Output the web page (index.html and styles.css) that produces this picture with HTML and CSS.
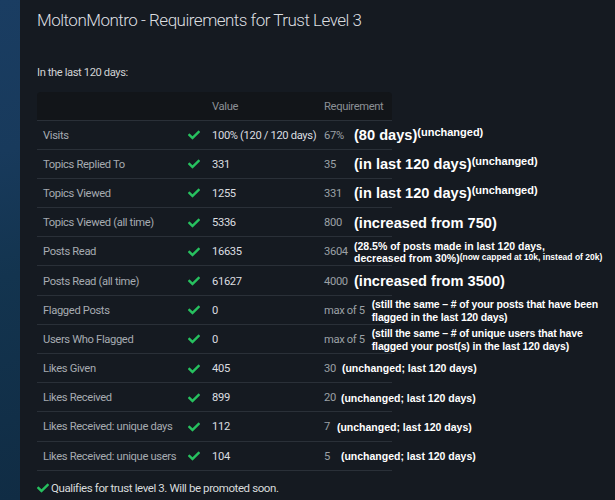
FILE: index.html
```html
<!DOCTYPE html>
<html>
<head>
<meta charset="utf-8">
<link rel="stylesheet" href="styles.css">
</head>
<body>
<div class="page">
  <div class="side"></div>
  <main class="main">
    <h1 class="title">MoltonMontro - Requirements for Trust Level 3</h1>
    <p class="intro">In the last 120 days:</p>
    <div class="table">
      <div class="row head"><span></span><span></span><span class="cell">Value</span><span class="cell">Requirement</span></div>
      <div class="row">
        <span class="cell lbl">Visits</span>
        <span class="ok"><svg viewBox="0 0 512 512"><path d="M173.9 439.4l-166.4-166.4c-10-10-10-26.2 0-36.2l36.2-36.2c10-10 26.2-10 36.2 0L192 312.7 432.1 72.6c10-10 26.2-10 36.2 0l36.2 36.2c10 10 10 26.2 0 36.2l-294.4 294.4c-10 10-26.2 10-36.2 0z"/></svg></span>
        <span class="cell val">100% (120 / 120 days)</span>
        <span class="cell req"><span class="num wide">67%</span><span class="note big">(80 days)<sup class="sup">(unchanged)</sup></span></span>
      </div>
      <div class="row">
        <span class="cell lbl">Topics Replied To</span>
        <span class="ok"><svg viewBox="0 0 512 512"><path d="M173.9 439.4l-166.4-166.4c-10-10-10-26.2 0-36.2l36.2-36.2c10-10 26.2-10 36.2 0L192 312.7 432.1 72.6c10-10 26.2-10 36.2 0l36.2 36.2c10 10 10 26.2 0 36.2l-294.4 294.4c-10 10-26.2 10-36.2 0z"/></svg></span>
        <span class="cell val">331</span>
        <span class="cell req"><span class="num wide">35</span><span class="note big">(in last 120 days)<sup class="sup">(unchanged)</sup></span></span>
      </div>
      <div class="row">
        <span class="cell lbl">Topics Viewed</span>
        <span class="ok"><svg viewBox="0 0 512 512"><path d="M173.9 439.4l-166.4-166.4c-10-10-10-26.2 0-36.2l36.2-36.2c10-10 26.2-10 36.2 0L192 312.7 432.1 72.6c10-10 26.2-10 36.2 0l36.2 36.2c10 10 10 26.2 0 36.2l-294.4 294.4c-10 10-26.2 10-36.2 0z"/></svg></span>
        <span class="cell val">1255</span>
        <span class="cell req"><span class="num wide">331</span><span class="note big">(in last 120 days)<sup class="sup">(unchanged)</sup></span></span>
      </div>
      <div class="row">
        <span class="cell lbl">Topics Viewed (all time)</span>
        <span class="ok"><svg viewBox="0 0 512 512"><path d="M173.9 439.4l-166.4-166.4c-10-10-10-26.2 0-36.2l36.2-36.2c10-10 26.2-10 36.2 0L192 312.7 432.1 72.6c10-10 26.2-10 36.2 0l36.2 36.2c10 10 10 26.2 0 36.2l-294.4 294.4c-10 10-26.2 10-36.2 0z"/></svg></span>
        <span class="cell val">5336</span>
        <span class="cell req"><span class="num wide">800</span><span class="note big">(increased from 750)</span></span>
      </div>
      <div class="row">
        <span class="cell lbl">Posts Read</span>
        <span class="ok"><svg viewBox="0 0 512 512"><path d="M173.9 439.4l-166.4-166.4c-10-10-10-26.2 0-36.2l36.2-36.2c10-10 26.2-10 36.2 0L192 312.7 432.1 72.6c10-10 26.2-10 36.2 0l36.2 36.2c10 10 10 26.2 0 36.2l-294.4 294.4c-10 10-26.2 10-36.2 0z"/></svg></span>
        <span class="cell val">16635</span>
        <span class="cell req"><span class="num wide">3604</span><span class="note small two">(28.5% of posts made in last 120 days,<br>decreased from 30%)<sup class="tiny">(now capped at 10k, instead of 20k)</sup></span></span>
      </div>
      <div class="row">
        <span class="cell lbl">Posts Read (all time)</span>
        <span class="ok"><svg viewBox="0 0 512 512"><path d="M173.9 439.4l-166.4-166.4c-10-10-10-26.2 0-36.2l36.2-36.2c10-10 26.2-10 36.2 0L192 312.7 432.1 72.6c10-10 26.2-10 36.2 0l36.2 36.2c10 10 10 26.2 0 36.2l-294.4 294.4c-10 10-26.2 10-36.2 0z"/></svg></span>
        <span class="cell val">61627</span>
        <span class="cell req"><span class="num wide">4000</span><span class="note big">(increased from 3500)</span></span>
      </div>
      <div class="row">
        <span class="cell lbl">Flagged Posts</span>
        <span class="ok"><svg viewBox="0 0 512 512"><path d="M173.9 439.4l-166.4-166.4c-10-10-10-26.2 0-36.2l36.2-36.2c10-10 26.2-10 36.2 0L192 312.7 432.1 72.6c10-10 26.2-10 36.2 0l36.2 36.2c10 10 10 26.2 0 36.2l-294.4 294.4c-10 10-26.2 10-36.2 0z"/></svg></span>
        <span class="cell val">0</span>
        <span class="cell req"><span class="num">max of 5</span><span class="note small two flag">(still the same – # of your posts that have been<br>flagged in the last 120 days)</span></span>
      </div>
      <div class="row">
        <span class="cell lbl">Users Who Flagged</span>
        <span class="ok"><svg viewBox="0 0 512 512"><path d="M173.9 439.4l-166.4-166.4c-10-10-10-26.2 0-36.2l36.2-36.2c10-10 26.2-10 36.2 0L192 312.7 432.1 72.6c10-10 26.2-10 36.2 0l36.2 36.2c10 10 10 26.2 0 36.2l-294.4 294.4c-10 10-26.2 10-36.2 0z"/></svg></span>
        <span class="cell val">0</span>
        <span class="cell req"><span class="num">max of 5</span><span class="note small two flag">(still the same – # of unique users that have<br>flagged your post(s) in the last 120 days)</span></span>
      </div>
      <div class="row">
        <span class="cell lbl">Likes Given</span>
        <span class="ok"><svg viewBox="0 0 512 512"><path d="M173.9 439.4l-166.4-166.4c-10-10-10-26.2 0-36.2l36.2-36.2c10-10 26.2-10 36.2 0L192 312.7 432.1 72.6c10-10 26.2-10 36.2 0l36.2 36.2c10 10 10 26.2 0 36.2l-294.4 294.4c-10 10-26.2 10-36.2 0z"/></svg></span>
        <span class="cell val">405</span>
        <span class="cell req"><span class="num">30</span><span class="note small gap6">(unchanged; last 120 days)</span></span>
      </div>
      <div class="row">
        <span class="cell lbl">Likes Received</span>
        <span class="ok"><svg viewBox="0 0 512 512"><path d="M173.9 439.4l-166.4-166.4c-10-10-10-26.2 0-36.2l36.2-36.2c10-10 26.2-10 36.2 0L192 312.7 432.1 72.6c10-10 26.2-10 36.2 0l36.2 36.2c10 10 10 26.2 0 36.2l-294.4 294.4c-10 10-26.2 10-36.2 0z"/></svg></span>
        <span class="cell val">899</span>
        <span class="cell req"><span class="num">20</span><span class="note small gap5">(unchanged; last 120 days)</span></span>
      </div>
      <div class="row">
        <span class="cell lbl">Likes Received: unique days</span>
        <span class="ok"><svg viewBox="0 0 512 512"><path d="M173.9 439.4l-166.4-166.4c-10-10-10-26.2 0-36.2l36.2-36.2c10-10 26.2-10 36.2 0L192 312.7 432.1 72.6c10-10 26.2-10 36.2 0l36.2 36.2c10 10 10 26.2 0 36.2l-294.4 294.4c-10 10-26.2 10-36.2 0z"/></svg></span>
        <span class="cell val">112</span>
        <span class="cell req"><span class="num">7</span><span class="note small gap7">(unchanged; last 120 days)</span></span>
      </div>
      <div class="row">
        <span class="cell lbl">Likes Received: unique users</span>
        <span class="ok"><svg viewBox="0 0 512 512"><path d="M173.9 439.4l-166.4-166.4c-10-10-10-26.2 0-36.2l36.2-36.2c10-10 26.2-10 36.2 0L192 312.7 432.1 72.6c10-10 26.2-10 36.2 0l36.2 36.2c10 10 10 26.2 0 36.2l-294.4 294.4c-10 10-26.2 10-36.2 0z"/></svg></span>
        <span class="cell val">104</span>
        <span class="cell req"><span class="num">5</span><span class="note small gap11">(unchanged; last 120 days)</span></span>
      </div>
    </div>
    <p class="foot"><svg class="foot-ok" viewBox="0 0 512 512"><path d="M173.9 439.4l-166.4-166.4c-10-10-10-26.2 0-36.2l36.2-36.2c10-10 26.2-10 36.2 0L192 312.7 432.1 72.6c10-10 26.2-10 36.2 0l36.2 36.2c10 10 10 26.2 0 36.2l-294.4 294.4c-10 10-26.2 10-36.2 0z"/></svg>Qualifies for trust level 3. Will be promoted soon.</p>
  </main>
</div>
</body>
</html>
```

FILE: styles.css
```css
html, body {
  margin: 0;
  padding: 0;
  height: 100%;
  background: #151a21;
  overflow: hidden;
}
.page {
  display: flex;
  height: 500px;
  font-family: Roboto, "Liberation Sans", sans-serif;
}
.side {
  width: 20px;
  flex: none;
  background: linear-gradient(165deg, #1a3d62 0%, #183a5c 30%, #13344f 55%, #102c44 100%);
}
.main {
  flex: 1;
  padding: 8px 0 0 17px;
  background: #151a21;
}
.title {
  margin: 0;
  font-size: 17px;
  line-height: 24px;
  font-weight: 300;
  color: #dcdee0;
  letter-spacing: -0.5px;
}
.intro {
  margin: 33px 0 0;
  font-size: 11.2px;
  line-height: 16px;
  color: #d0d2d4;
  letter-spacing: -0.4px;
}
.table {
  margin-top: 11px;
  width: 355px;
}
.row {
  display: grid;
  grid-template-columns: 145px 24px 112px 74px;
  align-items: center;
  height: 29.2px;
  box-sizing: border-box;
  border-bottom: 1px solid #2a3038;
  font-size: 11.2px;
  letter-spacing: -0.35px;
  padding-top: 1px;
}
.row.head {
  height: 28.5px;
  background: #121519;
  border-radius: 4px 4px 0 0;
  color: #8b9096;
  padding-top: 2px;
}
.cell {
  padding-left: 6px;
  white-space: nowrap;
}
.lbl { color: #a6abb1; }
.val { color: #dcdee0; }
.req {
  color: #9ca1a6;
  display: flex;
  align-items: center;
  overflow: visible;
}
.ok {
  display: flex;
  justify-content: center;
}
.ok svg, .foot-ok {
  width: 12px;
  height: 12px;
  fill: #27c15f;
}
.num { flex: none; }
.num.wide { width: 30px; }
.note {
  font-family: "Liberation Sans", Arial, sans-serif;
  font-weight: 700;
  color: #ffffff;
  letter-spacing: 0;
  white-space: nowrap;
}
.note.big {
  font-size: 14.6px;
  line-height: 18px;
}
.note.small {
  font-size: 10.5px;
  line-height: 12.5px;
}
.note.two { margin-top: 1px; }
.note.flag {
  margin-left: 7px;
  letter-spacing: -0.15px;
}
.sup {
  font-size: 11px;
  vertical-align: 4px;
  line-height: 0;
}
.tiny {
  font-size: 8.5px;
  vertical-align: 2px;
  line-height: 0;
}
.gap5 { margin-left: 5px; }
.gap6 { margin-left: 6px; }
.gap7 { margin-left: 7px; }
.gap11 { margin-left: 11px; }
.foot {
  margin: 9px 0 0;
  font-size: 11.5px;
  line-height: 16px;
  color: #d8dadc;
  display: flex;
  align-items: center;
  gap: 2px;
  letter-spacing: -0.4px;
}
```
